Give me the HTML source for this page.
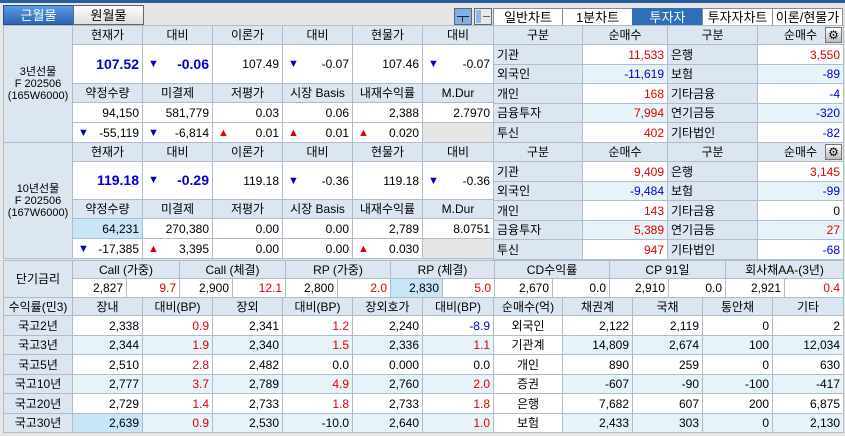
<!DOCTYPE html>
<html><head><meta charset="utf-8">
<style>
body{margin:0;width:845px;height:436px;background:#e6e6e6;position:relative;overflow:hidden;font:12px "Liberation Sans","Noto Sans CJK KR",sans-serif;color:#000}
table{position:absolute;border-collapse:collapse;table-layout:fixed}
td{border:1px solid #aebccc;padding:0 3px;white-space:nowrap;overflow:hidden;text-align:right;background:#fff;line-height:14px}
td.h{background:#dbe6f1;text-align:center}
td.l{background:#dbe6f1;text-align:left}
td.c{text-align:center}
td.g{background:#e6e6e6}
td.lab{padding:0 1px;font-size:11px;line-height:12px}
tr.a td{background:#e6f3f8}
tr.a td.h,tr.a td.l{background:#dbe6f1}
td.s{background:#c8e6f8!important}
.r{color:#e00000}.b{color:#0000d0}
.bb{color:#0000d0;font-weight:bold;font-size:14px}
.d,.u{float:left;font-size:11px;margin-left:2px}
.d{color:#0000c0}.u{color:#e00000}
.tab{position:absolute;height:18px;line-height:18px;text-align:center;border:1px solid #8a8a8a;box-sizing:border-box;font-size:13px}
</style></head><body>
<div style="position:absolute;left:0;top:0;width:845px;height:3px;background:#2a5d9c"></div>
<div class="tab" style="left:3px;top:5px;width:71px;height:20px;line-height:20px;background:linear-gradient(#5b9ae0,#2a66b4);color:#fff;border-color:#2a4f80">근월물</div>
<div class="tab" style="left:73px;top:5px;width:71px;height:20px;line-height:20px;background:linear-gradient(#fff,#ddd);border-color:#666">원월물</div>
<div style="position:absolute;left:454px;top:8px;width:18px;height:17px;border:1px solid #666;box-sizing:border-box;background:#7fb0e8"><div style="position:absolute;left:2px;top:7px;width:12px;height:1px;background:#222"></div><div style="position:absolute;left:7px;top:7px;width:1px;height:6px;background:#222"></div></div>
<div style="position:absolute;left:474px;top:8px;width:18px;height:17px;border:1px solid #666;box-sizing:border-box;background:#e8e8e8"><div style="position:absolute;left:1px;top:1px;width:5px;height:13px;background:#8ab8ec"></div><div style="position:absolute;left:8px;top:7px;width:7px;height:1px;background:#666"></div></div>
<div class="tab" style="left:493px;top:8px;width:70px;background:#fff">일반차트</div>
<div class="tab" style="left:562px;top:8px;width:71px;background:#fff">1분차트</div>
<div class="tab" style="left:632px;top:8px;width:71px;background:#2f6fb8;color:#fff;border-color:#2f6fb8">투자자</div>
<div class="tab" style="left:702px;top:8px;width:71px;background:#fff">투자자차트</div>
<div class="tab" style="left:772px;top:8px;width:71px;background:#fff">이론/현물가</div>

<table style="left:3px;top:25px;width:490px">
<colgroup><col style="width:69px"><col style="width:70px"><col style="width:70px"><col style="width:70px"><col style="width:70px"><col style="width:70px"><col style="width:71px"></colgroup>
<tr style="height:19px"><td class="h lab" rowspan="5">3년선물<br>F 202506<br>(165W6000)</td><td class="h">현재가</td><td class="h">대비</td><td class="h">이론가</td><td class="h">대비</td><td class="h">현물가</td><td class="h">대비</td></tr>
<tr style="height:39px"><td><span class="bb">107.52</span></td><td><span class="d">▼</span><span class="bb">-0.06</span></td><td>107.49</td><td><span class="d">▼</span>-0.07</td><td>107.46</td><td><span class="d">▼</span>-0.07</td></tr>
<tr style="height:19px"><td class="h">약정수량</td><td class="h">미결제</td><td class="h">저평가</td><td class="h">시장 Basis</td><td class="h">내재수익률</td><td class="h">M.Dur</td></tr>
<tr style="height:20px"><td>94,150</td><td>581,779</td><td>0.03</td><td>0.06</td><td>2,388</td><td>2.7970</td></tr>
<tr style="height:20px"><td><span class="d">▼</span>-55,119</td><td><span class="d">▼</span>-6,814</td><td><span class="u">▲</span>0.01</td><td><span class="u">▲</span>0.01</td><td><span class="u">▲</span>0.020</td><td class="g"></td></tr>
</table>

<table style="left:3px;top:142px;width:490px">
<colgroup><col style="width:69px"><col style="width:70px"><col style="width:70px"><col style="width:70px"><col style="width:70px"><col style="width:70px"><col style="width:71px"></colgroup>
<tr style="height:19px"><td class="h lab" rowspan="5">10년선물<br>F 202506<br>(167W6000)</td><td class="h">현재가</td><td class="h">대비</td><td class="h">이론가</td><td class="h">대비</td><td class="h">현물가</td><td class="h">대비</td></tr>
<tr style="height:38px"><td><span class="bb">119.18</span></td><td><span class="d">▼</span><span class="bb">-0.29</span></td><td>119.18</td><td><span class="d">▼</span>-0.36</td><td>119.18</td><td><span class="d">▼</span>-0.36</td></tr>
<tr style="height:19px"><td class="h">약정수량</td><td class="h">미결제</td><td class="h">저평가</td><td class="h">시장 Basis</td><td class="h">내재수익률</td><td class="h">M.Dur</td></tr>
<tr style="height:20px"><td class="s">64,231</td><td>270,380</td><td>0.00</td><td>0.00</td><td>2,789</td><td>8.0751</td></tr>
<tr style="height:20px"><td><span class="d">▼</span>-17,385</td><td><span class="u">▲</span>3,395</td><td>0.00</td><td>0.00</td><td><span class="u">▲</span>0.030</td><td class="g"></td></tr>
</table>

<table style="left:493px;top:25px;width:350px">
<colgroup><col style="width:89px"><col style="width:85px"><col style="width:90px"><col style="width:86px"></colgroup>
<tr style="height:19px"><td class="h">구분</td><td class="h">순매수</td><td class="h">구분</td><td class="h" style="position:relative">순매수<span style="position:absolute;right:1px;top:1px;width:17px;height:16px;background:linear-gradient(#fff,#bbb);border:1px solid #777;box-sizing:border-box;line-height:14px;font-size:12px;text-align:center">⚙</span></td></tr>
<tr style="height:20px"><td class="l">기관</td><td class="r">11,533</td><td class="l">은행</td><td class="r">3,550</td></tr>
<tr class="a" style="height:19px"><td class="l">외국인</td><td class="b">-11,619</td><td class="l">보험</td><td class="b">-89</td></tr>
<tr style="height:20px"><td class="l">개인</td><td class="r">168</td><td class="l">기타금융</td><td class="b">-4</td></tr>
<tr class="a" style="height:19px"><td class="l">금융투자</td><td class="r">7,994</td><td class="l">연기금등</td><td class="b">-320</td></tr>
<tr style="height:20px"><td class="l">투신</td><td class="r">402</td><td class="l">기타법인</td><td class="b">-82</td></tr>
</table>

<table style="left:493px;top:142px;width:350px">
<colgroup><col style="width:89px"><col style="width:85px"><col style="width:90px"><col style="width:86px"></colgroup>
<tr style="height:19px"><td class="h">구분</td><td class="h">순매수</td><td class="h">구분</td><td class="h" style="position:relative">순매수<span style="position:absolute;right:1px;top:1px;width:17px;height:16px;background:linear-gradient(#fff,#bbb);border:1px solid #777;box-sizing:border-box;line-height:14px;font-size:12px;text-align:center">⚙</span></td></tr>
<tr style="height:20px"><td class="l">기관</td><td class="r">9,409</td><td class="l">은행</td><td class="r">3,145</td></tr>
<tr class="a" style="height:19px"><td class="l">외국인</td><td class="b">-9,484</td><td class="l">보험</td><td class="b">-99</td></tr>
<tr style="height:20px"><td class="l">개인</td><td class="r">143</td><td class="l">기타금융</td><td>0</td></tr>
<tr class="a" style="height:19px"><td class="l">금융투자</td><td class="r">5,389</td><td class="l">연기금등</td><td class="r">27</td></tr>
<tr style="height:20px"><td class="l">투신</td><td class="r">947</td><td class="l">기타법인</td><td class="b">-68</td></tr>
</table>

<table style="left:3px;top:260px;width:840px">
<colgroup><col style="width:69px"><col style="width:54px"><col style="width:53px"><col style="width:53px"><col style="width:53px"><col style="width:52px"><col style="width:53px"><col style="width:52px"><col style="width:52px"><col style="width:58px"><col style="width:57px"><col style="width:59px"><col style="width:57px"><col style="width:59px"><col style="width:59px"></colgroup>
<tr style="height:18px"><td class="h" rowspan="2">단기금리</td><td class="h" colspan="2">Call (가중)</td><td class="h" colspan="2">Call (체결)</td><td class="h" colspan="2">RP (가중)</td><td class="h" colspan="2">RP (체결)</td><td class="h" colspan="2">CD수익률</td><td class="h" colspan="2">CP 91일</td><td class="h" colspan="2">회사채AA-(3년)</td></tr>
<tr style="height:19px"><td>2,827</td><td class="r">9.7</td><td>2,900</td><td class="r">12.1</td><td>2,800</td><td class="r">2.0</td><td class="s">2,830</td><td class="r">5.0</td><td>2,670</td><td>0.0</td><td>2,910</td><td>0.0</td><td>2,921</td><td class="r">0.4</td></tr>
</table>

<table style="left:3px;top:297px;width:490px">
<colgroup><col style="width:69px"><col style="width:70px"><col style="width:70px"><col style="width:70px"><col style="width:70px"><col style="width:70px"><col style="width:71px"></colgroup>
<tr style="height:18px"><td class="h">수익률(민3)</td><td class="h">장내</td><td class="h">대비(BP)</td><td class="h">장외</td><td class="h">대비(BP)</td><td class="h">장외호가</td><td class="h">대비(BP)</td></tr>
<tr style="height:20px"><td class="h">국고2년</td><td>2,338</td><td class="r">0.9</td><td>2,341</td><td class="r">1.2</td><td>2,240</td><td class="b">-8.9</td></tr>
<tr class="a" style="height:19px"><td class="h">국고3년</td><td>2,344</td><td class="r">1.9</td><td>2,340</td><td class="r">1.5</td><td>2,336</td><td class="r">1.1</td></tr>
<tr style="height:20px"><td class="h">국고5년</td><td>2,510</td><td class="r">2.8</td><td>2,482</td><td>0.0</td><td>0.000</td><td>0.0</td></tr>
<tr class="a" style="height:19px"><td class="h">국고10년</td><td>2,777</td><td class="r">3.7</td><td>2,789</td><td class="r">4.9</td><td>2,760</td><td class="r">2.0</td></tr>
<tr style="height:20px"><td class="h">국고20년</td><td>2,729</td><td class="r">1.4</td><td>2,733</td><td class="r">1.8</td><td>2,733</td><td class="r">1.8</td></tr>
<tr class="a" style="height:19px"><td class="h">국고30년</td><td class="s">2,639</td><td class="r">0.9</td><td>2,530</td><td>-10.0</td><td>2,640</td><td class="r">1.0</td></tr>
</table>

<table style="left:493px;top:297px;width:350px">
<colgroup><col style="width:69px"><col style="width:70px"><col style="width:70px"><col style="width:70px"><col style="width:71px"></colgroup>
<tr style="height:18px"><td class="h">순매수(억)</td><td class="h">채권계</td><td class="h">국채</td><td class="h">통안채</td><td class="h">기타</td></tr>
<tr style="height:20px"><td class="c">외국인</td><td>2,122</td><td>2,119</td><td>0</td><td>2</td></tr>
<tr class="a" style="height:19px"><td class="c" style="background:#fff">기관계</td><td>14,809</td><td>2,674</td><td>100</td><td>12,034</td></tr>
<tr style="height:20px"><td class="c">개인</td><td>890</td><td>259</td><td>0</td><td>630</td></tr>
<tr class="a" style="height:19px"><td class="c" style="background:#fff">증권</td><td>-607</td><td>-90</td><td>-100</td><td>-417</td></tr>
<tr style="height:20px"><td class="c">은행</td><td>7,682</td><td>607</td><td>200</td><td>6,875</td></tr>
<tr class="a" style="height:19px"><td class="c" style="background:#fff">보험</td><td>2,433</td><td>303</td><td>0</td><td>2,130</td></tr>
</table>
</body></html>
